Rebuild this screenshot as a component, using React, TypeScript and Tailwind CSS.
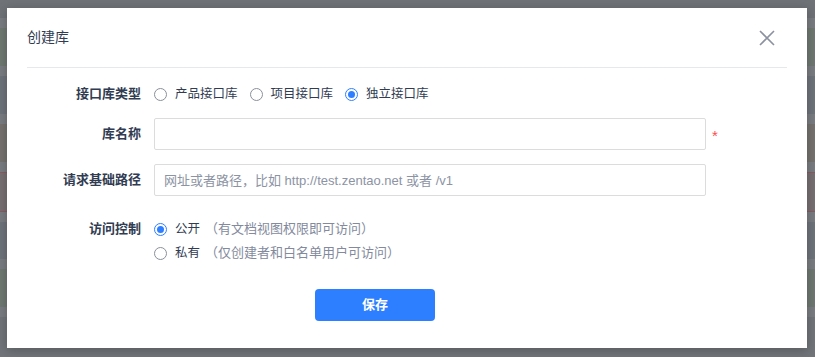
const bands = [
  { h: 'h-[18px]', c: 'bg-[#6f7377]' },
  { h: 'h-[10px]', c: 'bg-[#797c80]' },
  { h: 'h-[38px]', c: 'bg-[#6f7872]' },
  { h: 'h-[10px]', c: 'bg-[#797c80]' },
  { h: 'h-[38px]', c: 'bg-[#6e747b]' },
  { h: 'h-[10px]', c: 'bg-[#797c80]' },
  { h: 'h-[38px]', c: 'bg-[#75726f]' },
  { h: 'h-[10px]', c: 'bg-[#797c80]' },
  { h: 'h-[40px]', c: 'bg-[#776f72] border-y border-[#8a5a62]' },
  { h: 'h-[10px]', c: 'bg-[#797c80]' },
  { h: 'h-[37px]', c: 'bg-[#6e747b]' },
  { h: 'h-[10px]', c: 'bg-[#797c80]' },
  { h: 'h-[38px]', c: 'bg-[#6f7872]' },
  { h: 'h-[10px]', c: 'bg-[#797c80]' },
  { h: 'h-[40px]', c: 'bg-[#717579]' },
]

function Radio({ checked }: { checked?: boolean }) {
  return checked ? (
    <span className="w-[13px] h-[13px] rounded-full border border-[#2e7fff] flex items-center justify-center shrink-0">
      <span className="w-[7px] h-[7px] rounded-full bg-[#2e7fff]" />
    </span>
  ) : (
    <span className="w-[13px] h-[13px] rounded-full border border-[#8a8f99] shrink-0" />
  )
}

function Option({ label, hint, checked }: { label: string; hint?: string; checked?: boolean }) {
  return (
    <label className="flex items-center gap-2 h-6 text-[12.5px]">
      <Radio checked={checked} />
      <span className="text-[#313c52]">
        {label}
        {hint && <span className="text-[#838a9d] text-[13px] ml-[5px]">（{hint}）</span>}
      </span>
    </label>
  )
}

export default function App() {
  return (
    <div
      className="relative w-[815px] h-[357px] overflow-hidden text-[13px]"
      style={{ fontFamily: '"Liberation Sans", "Noto Sans CJK SC", sans-serif' }}
    >
      <div className="flex flex-col">
        {bands.map((b, i) => (
          <div key={i} className={`${b.h} ${b.c}`} />
        ))}
      </div>

      {/* dialog */}
      <div className="absolute left-[7px] top-[8px] w-[800px] h-[340px] bg-white shadow-[0_2px_10px_rgba(0,0,0,0.25)] flex flex-col">
        <div className="mx-5 h-[60px] flex items-center justify-between border-b border-[#e6e8ec]">
          <span className="text-[14px] text-[#313c52]">创建库</span>
          <svg width="16" height="16" viewBox="0 0 16 16" className="mr-[12px]">
            <path d="M1 1 L15 15 M15 1 L1 15" stroke="#8b91a0" strokeWidth="1.6" fill="none" />
          </svg>
        </div>

        <div className="pl-5 pt-[10px] flex flex-col">
          <div className="flex items-center h-8">
            <div className="w-[114px] text-right font-bold text-[#313c52]">接口库类型</div>
            <div className="ml-[13px] flex items-center gap-3">
              <Option label="产品接口库" />
              <Option label="项目接口库" />
              <Option label="独立接口库" checked />
            </div>
          </div>

          <div className="flex items-center h-8 mt-2">
            <div className="w-[114px] text-right font-bold text-[#313c52]">库名称</div>
            <input className="ml-[13px] w-[552px] h-8 border border-[#dcdcdc] rounded-[2px] px-[10px] outline-none" />
            <span className="ml-[6px] text-[#ff4d4f] text-[15px] mt-1">*</span>
          </div>

          <div className="flex items-center h-8 mt-[14px]">
            <div className="w-[114px] text-right font-bold text-[#313c52]">请求基础路径</div>
            <input
              className="ml-[13px] w-[552px] h-8 border border-[#dcdcdc] rounded-[2px] px-[9px] outline-none placeholder:text-[#8c93a3]"
              placeholder="网址或者路径，比如 http://test.zentao.net 或者 /v1"
            />
          </div>

          <div className="flex mt-[21px]">
            <div className="w-[114px] h-6 leading-6 text-right font-bold text-[#313c52]">访问控制</div>
            <div className="ml-[13px] flex flex-col">
              <Option label="公开" hint="有文档视图权限即可访问" checked />
              <Option label="私有" hint="仅创建者和白名单用户可访问" />
            </div>
          </div>
        </div>

        <div className="flex pl-[308px] mt-6">
          <button className="w-[120px] h-8 rounded-[4px] bg-[#2e7fff] text-white text-[13px] font-bold">保存</button>
        </div>
      </div>
    </div>
  )
}
